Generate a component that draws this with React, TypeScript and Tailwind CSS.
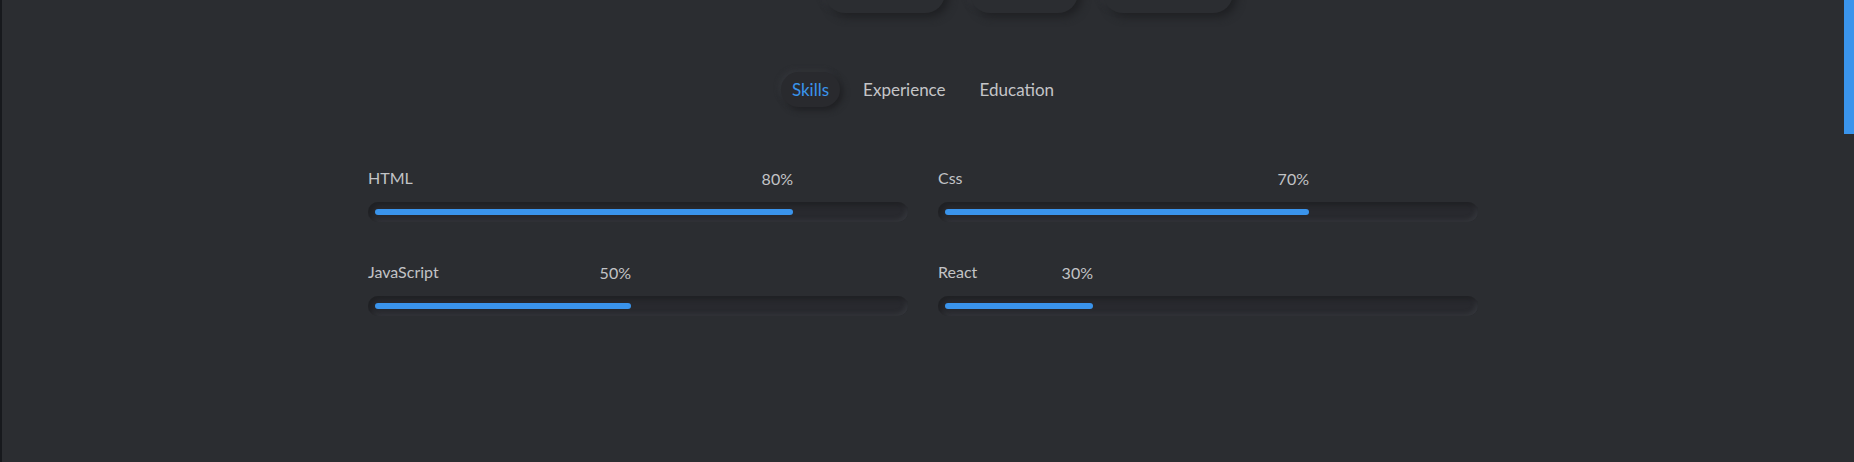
import React from 'react'

const skills = [
  { name: 'HTML', value: 80 },
  { name: 'Css', value: 70 },
  { name: 'JavaScript', value: 50 },
  { name: 'React', value: 30 },
]

function SkillBar({ name, value }: { name: string; value: number }) {
  return (
    <div>
      <div className="relative h-[24px] text-[16px] text-[#c2c3c6]">
        <span>{name}</span>
        <span className="absolute top-[1px] -translate-x-full" style={{ left: `calc(${value}% - 7px)` }}>
          {value}%
        </span>
      </div>
      <div className="mt-[12px] h-[20px] rounded-full bg-[#28292e] py-[7px] shadow-[inset_3px_3px_5px_#1f2023,inset_-2px_-2px_4px_#35373c]">
        <div className="ml-[7px] h-[6px] rounded-full bg-[#3a94ec]" style={{ width: `calc(${value}% - 14px)` }} />
      </div>
    </div>
  )
}

export default function App() {
  return (
    <div className="flex min-h-[462px] overflow-hidden bg-[#2b2d31] font-['Lato','Noto_Sans',sans-serif]">
      <div className="w-[2px] shrink-0 bg-[#17191d]" />
      <div className="flex-1">
        <div className="-mt-[31px] flex gap-[25px] pl-[823px]">
          <div className="h-[44px] w-[120px] rounded-[20px] bg-[#2b2d31] shadow-[4px_4px_8px_#1f2023,-3px_-3px_6px_#35373c]" />
          <div className="h-[44px] w-[108px] rounded-[20px] bg-[#2b2d31] shadow-[4px_4px_8px_#1f2023,-3px_-3px_6px_#35373c]" />
          <div className="h-[44px] w-[130px] rounded-[20px] bg-[#2b2d31] shadow-[4px_4px_8px_#1f2023,-3px_-3px_6px_#35373c]" />
        </div>

        <div className="mt-[59px] flex justify-center gap-[12px] text-[17px]">
          <button className="h-[35px] rounded-full bg-[#292a2e] px-[11px] leading-[34px] text-[#3a94ec] shadow-[3px_3px_6px_#1f2023,-2px_-2px_5px_#34363b]">
            Skills
          </button>
          <button className="h-[35px] px-[11px] leading-[34px] text-[#c4c5c8]">Experience</button>
          <button className="h-[35px] px-[11px] leading-[34px] text-[#c4c5c8]">Education</button>
        </div>

        <div className="mx-auto mt-[59px] grid w-[1110px] grid-cols-2 gap-x-[30px] gap-y-[38px]">
          {skills.map((s) => (
            <SkillBar key={s.name} name={s.name} value={s.value} />
          ))}
        </div>
      </div>
      <div className="w-[10px] shrink-0">
        <div className="h-[134px] bg-[#3a94ec]" />
      </div>
    </div>
  )
}
